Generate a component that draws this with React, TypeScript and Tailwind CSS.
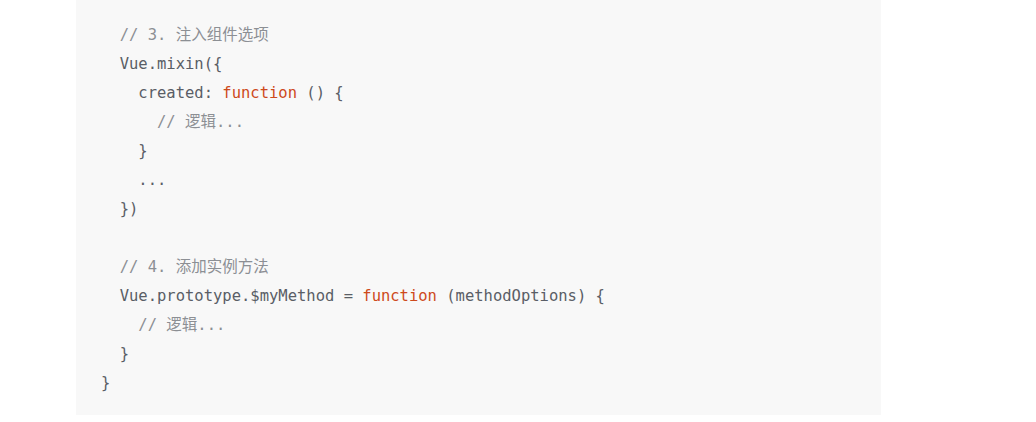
import React from "react";

const K = ({ children }: { children: React.ReactNode }) => (
  <span className="text-[#ce4a1c]">{children}</span>
);
const C = ({ children }: { children: React.ReactNode }) => (
  <span className="text-[#8c8f94]">{children}</span>
);

export default function App() {
  return (
    <div className="w-[1036px] h-[422px] bg-white">
      <div className="ml-[76px] w-[805px] h-[415px] bg-[#f8f8f8] pt-[21px] pl-[25px]">
        <pre
          className="m-0 text-[15.5px] leading-[29px] text-[#5a5e66] whitespace-pre"
          style={{ fontFamily: '"DejaVu Sans Mono", "Noto Sans CJK SC", monospace' }}
        >
          <div><C>{"  // 3. 注入组件选项"}</C></div>
          <div>{"  Vue.mixin({"}</div>
          <div>{"    created: "}<K>function</K>{" () {"}</div>
          <div><C>{"      // 逻辑..."}</C></div>
          <div>{"    }"}</div>
          <div>{"    ..."}</div>
          <div>{"  })"}</div>
          <div>{" "}</div>
          <div><C>{"  // 4. 添加实例方法"}</C></div>
          <div>{"  Vue.prototype.$myMethod = "}<K>function</K>{" (methodOptions) {"}</div>
          <div><C>{"    // 逻辑..."}</C></div>
          <div>{"  }"}</div>
          <div>{"}"}</div>
        </pre>
      </div>
    </div>
  );
}
